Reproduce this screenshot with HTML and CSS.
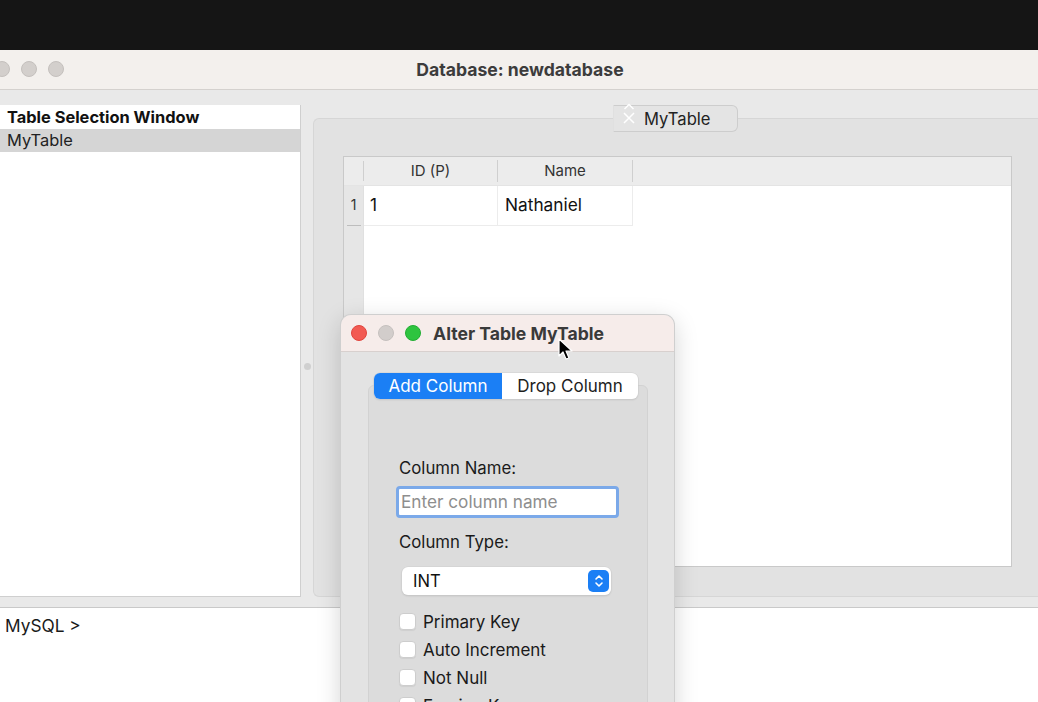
FILE: index.html
```html
<!DOCTYPE html>
<html>
<head>
<meta charset="utf-8">
<link rel="stylesheet" href="styles.css">
</head>
<body>
<div class="topbar"></div>
<div class="window">
  <div class="titlebar">
    <div class="lights">
      <span class="light gray"></span>
      <span class="light gray"></span>
      <span class="light gray"></span>
    </div>
    <div class="title">Database: newdatabase</div>
  </div>
  <div class="main">
    <div class="leftpanel">
      <div class="list-header">Table Selection Window</div>
      <div class="list-item selected">MyTable</div>
    </div>
    <div class="splitter"><span class="split-dot"></span></div>
    <div class="tabarea">
      <div class="tabbar">
        <div class="tab">
          <span class="tab-icons">
            <svg width="14" height="26" viewBox="0 0 14 26"><path d="M2.5 6 L7 1.5 L11.5 6" fill="none" stroke="#fff" stroke-width="1.5"/><path d="M2 10 L12 20 M12 10 L2 20" fill="none" stroke="#fff" stroke-width="1.5"/></svg>
          </span>
          <span class="tab-label">MyTable</span>
        </div>
      </div>
      <div class="tabpane">
        <div class="grid">
          <div class="grid-head">
            <div class="rownum-h"></div>
            <div class="col-h w1">ID (P)</div>
            <div class="col-h w2">Name</div>
          </div>
          <div class="grid-body">
            <div class="rownums">
              <div class="rn">1</div>
              <div class="rn-tick"></div>
            </div>
            <div class="cells">
              <div class="row">
                <div class="cell w1">1</div>
                <div class="cell w2">Nathaniel</div>
              </div>
            </div>
          </div>
        </div>
      </div>
    </div>
  </div>
  <div class="console">MySQL &gt;</div>
</div>

<div class="dialog">
  <div class="dlg-titlebar">
    <div class="lights">
      <span class="light red"></span>
      <span class="light gray2"></span>
      <span class="light green"></span>
    </div>
    <div class="dlg-title">Alter Table MyTable</div>
  </div>
  <div class="dlg-body">
    <div class="segmented">
      <div class="seg active">Add Column</div>
      <div class="seg">Drop Column</div>
    </div>
    <div class="group">
      <div class="label first">Column Name:</div>
      <div class="textfield">Enter column name</div>
      <div class="label">Column Type:</div>
      <div class="select">
        <span>INT</span>
        <span class="stepper">
          <svg width="10" height="14" viewBox="0 0 10 14"><path d="M2 5 L5 2 L8 5 M2 9 L5 12 L8 9" fill="none" stroke="#fff" stroke-width="1.6" stroke-linecap="round" stroke-linejoin="round"/></svg>
        </span>
      </div>
      <div class="checks">
        <label class="check"><span class="box"></span>Primary Key</label>
        <label class="check"><span class="box"></span>Auto Increment</label>
        <label class="check"><span class="box"></span>Not Null</label>
        <label class="check"><span class="box"></span>Foreign Key</label>
      </div>
    </div>
  </div>
</div>

<svg class="cursor" width="16" height="24" viewBox="0 0 16 24"><path d="M1 1 L1 18 L5 14 L8 21 L11 20 L8 13 L14 13 Z" fill="#000" stroke="#fff" stroke-width="1.2" stroke-linejoin="round"/></svg>
</body>
</html>
```

FILE: styles.css
```css
html, body {
  margin: 0;
  padding: 0;
}
body {
  width: 1038px;
  height: 702px;
  overflow: hidden;
  position: relative;
  font-family: Inter, "Liberation Sans", sans-serif;
  color: #1d1d1d;
  background: #e9e9e9;
}
.topbar {
  height: 50px;
  background: #151515;
}
.window {
  height: 652px;
  display: flex;
  flex-direction: column;
  background: #e9e9e9;
}
.titlebar {
  height: 39px;
  background: #f3f0ed;
  border-bottom: 1px solid #d4d1ce;
  position: relative;
  display: flex;
  align-items: center;
  justify-content: center;
}
.lights {
  display: flex;
  gap: 11px;
  align-items: center;
}
.titlebar .lights {
  position: absolute;
  left: -6px;
  top: 11px;
}
.light {
  width: 16px;
  height: 16px;
  border-radius: 50%;
  box-sizing: border-box;
  display: inline-block;
}
.light.gray {
  background: #d3cfcc;
  border: 1px solid #c4c0bd;
}
.title {
  font-weight: 700;
  font-size: 17.6px;
  color: #3c3c3c;
  margin-left: 2px;
  margin-top: -1px;
}
.main {
  height: 517px;
  display: flex;
  border-bottom: 1px solid #c9c9c9;
}
.leftpanel {
  width: 301px;
  margin-top: 15px;
  height: 492px;
  background: #ffffff;
  border-right: 1px solid #cfcfcf;
  border-bottom: 1px solid #cfcfcf;
  box-sizing: border-box;
}
.list-header {
  height: 24px;
  line-height: 24px;
  font-weight: 700;
  font-size: 16.4px;
  padding-left: 7px;
  color: #111;
}
.list-item {
  height: 23px;
  line-height: 23px;
  font-size: 16.4px;
  padding-left: 7px;
  color: #222;
}
.list-item.selected {
  background: #d5d5d5;
}
.splitter {
  width: 12px;
  display: flex;
  align-items: center;
  justify-content: center;
}
.split-dot {
  width: 7px;
  height: 7px;
  border-radius: 50%;
  background: #cfcfcf;
  margin-top: 36px;
}
.tabarea {
  flex: 1;
  position: relative;
  padding-top: 28px;
}
.tabbar {
  position: absolute;
  top: 15px;
  left: 300px;
  z-index: 2;
}
.tab {
  width: 125px;
  height: 27px;
  box-sizing: border-box;
  background: #e4e4e4;
  border: 1px solid #cdcdcd;
  border-left-color: #e0e0e0;
  border-radius: 0 6px 6px 0;
  display: flex;
  align-items: center;
  padding-left: 8px;
  gap: 8px;
}
.tab-icons {
  display: flex;
  margin-top: -6px;
}
.tab-label {
  font-size: 16.6px;
  color: #222;
}
.tabpane {
  height: 479px;
  box-sizing: border-box;
  background: #e2e2e2;
  border: 1px solid #d6d6d6;
  border-right: none;
  border-radius: 6px 0 0 6px;
  padding: 37px 0 0 29px;
}
.grid {
  width: 669px;
  height: 411px;
  box-sizing: border-box;
  border: 1px solid #c9c9c9;
  background: #ffffff;
  display: flex;
  flex-direction: column;
}
.grid-head {
  height: 29px;
  display: flex;
  background: #ececec;
  border-bottom: 1px solid #e4e4e4;
  box-sizing: border-box;
}
.rownum-h {
  width: 19px;
  border-right: 1px solid #cfcfcf;
  margin: 4px 0;
}
.col-h {
  box-sizing: border-box;
  border-right: 1px solid #cfcfcf;
  margin: 3px 0;
  font-size: 15px;
  color: #333;
  display: flex;
  align-items: center;
  justify-content: center;
  padding-bottom: 2px;
}
.w1 { width: 134px; }
.w2 { width: 135px; }
.grid-body {
  flex: 1;
  display: flex;
}
.rownums {
  width: 19px;
  background: #e6e6e6;
  border-right: 1px solid #e0e0e0;
}
.rn {
  height: 39px;
  line-height: 37px;
  font-size: 14px;
  color: #333;
  text-align: center;
}
.rn-tick {
  width: 14px;
  height: 1px;
  background: #bdbdbd;
  margin-left: 3px;
}
.cells {
  flex: 1;
}
.row {
  display: flex;
  height: 40px;
}
.cell {
  box-sizing: border-box;
  border-right: 1px solid #ececec;
  border-bottom: 1px solid #ececec;
  font-size: 17.3px;
  color: #111;
  display: flex;
  align-items: center;
  padding-left: 6px;
  padding-bottom: 3px;
}
.cell.w2 { padding-left: 7px; }
.console {
  flex: 1;
  background: #ffffff;
  font-size: 17.3px;
  color: #1a1a1a;
  padding: 7px 0 0 5px;
}

/* dialog */
.dialog {
  position: absolute;
  left: 341px;
  top: 315px;
  width: 333px;
  height: 420px;
  border-radius: 10px 10px 0 0;
  background: #e3e3e3;
  box-shadow: 0 0 0 1px #cfcfcf, 0 6px 24px rgba(0,0,0,0.18);
  overflow: hidden;
}
.dlg-titlebar {
  height: 36px;
  background: #f6ecea;
  border-bottom: 1px solid #d8d0ce;
  display: flex;
  align-items: center;
  padding-left: 10px;
  gap: 12px;
}
.light.red { background: #f25a52; border: 1px solid #e0443d; }
.light.gray2 { background: #d2cdcb; border: 1px solid #c5c0be; }
.light.green { background: #2ec43f; border: 1px solid #22ad33; }
.dlg-title {
  font-weight: 700;
  font-size: 17.6px;
  color: #3a3a3a;
}
.dlg-body {
  position: relative;
  padding: 33px 26px 0 27px;
}
.segmented {
  position: absolute;
  top: 21px;
  left: 33px;
  width: 264px;
  height: 26px;
  display: flex;
  border-radius: 6px;
  background: #fff;
  box-shadow: 0 0 0 0.5px #cfcfcf, 0 1px 2px rgba(0,0,0,0.12);
  overflow: hidden;
  z-index: 1;
}
.seg {
  display: flex;
  align-items: center;
  justify-content: center;
  font-size: 17px;
  color: #1e1e1e;
  flex: 1;
}
.seg.active {
  flex: 0 0 128px;
  background: #1b7ff5;
  color: #fff;
}
.group {
  background: #dcdcdc;
  border: 1px solid #d2d2d2;
  border-radius: 6px;
  height: 400px;
  padding: 60px 0 0 30px;
  box-sizing: border-box;
}
.label {
  font-size: 16.8px;
  color: #1a1a1a;
  height: 22px;
  line-height: 22px;
  margin-top: 13px;
}
.label.first {
  margin-top: 11px;
}
.textfield {
  margin: 7px 0 0 -3px;
  width: 223px;
  height: 32px;
  box-sizing: border-box;
  border: 3px solid #7ba9e9;
  border-radius: 4px;
  background: #fff;
  font-size: 17.2px;
  color: #8e8e8e;
  padding-left: 2px;
  line-height: 26px;
}
.select {
  margin: 14px 0 0 3px;
  width: 209px;
  height: 28px;
  box-sizing: border-box;
  background: #fff;
  border-radius: 6px;
  box-shadow: 0 0 0 0.5px #cfcfcf, 0 1px 2px rgba(0,0,0,0.15);
  display: flex;
  align-items: center;
  justify-content: space-between;
  padding: 0 2px 0 11px;
  font-size: 16.6px;
  color: #111;
}
.stepper {
  width: 21px;
  height: 22px;
  border-radius: 5px;
  background: #1b7ff5;
  display: flex;
  align-items: center;
  justify-content: center;
}
.checks {
  margin-top: 17px;
  display: flex;
  flex-direction: column;
  gap: 9px;
}
.check {
  display: flex;
  align-items: center;
  gap: 7px;
  font-size: 17px;
  color: #1a1a1a;
  height: 19px;
}
.box {
  width: 17px;
  height: 17px;
  box-sizing: border-box;
  border-radius: 4px;
  background: #fff;
  border: 1px solid #cdcdcd;
  box-shadow: 0 1px 1px rgba(0,0,0,0.06);
}
.cursor {
  position: absolute;
  left: 558px;
  top: 338px;
}
```
